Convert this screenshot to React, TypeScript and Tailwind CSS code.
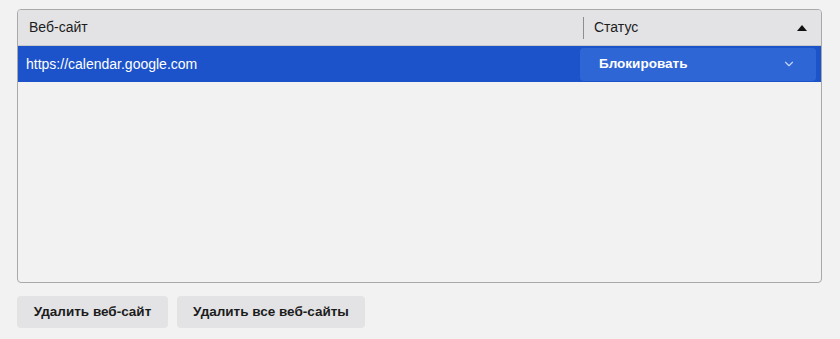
import { ChevronDown } from 'lucide-react';

const sites = [{ url: 'https://calendar.google.com', status: 'Блокировать' }];

export default function App() {
  return (
    <div
      className="h-[339px] w-[840px] bg-[#f2f2f2] pl-[17px] pr-[18px] pt-[9px]"
      style={{ fontFamily: '"Liberation Sans", Arial, sans-serif' }}
    >
      {/* Table */}
      <div className="h-[274px] overflow-hidden rounded-[4px] border border-[#a9a9a9] bg-[#f2f2f2]">
        {/* Header */}
        <div className="flex h-[36px] items-center border-b border-[#c9c9cc] bg-[#e3e3e6] text-[14px] text-[#1c1c1c]">
          <div className="flex-1 pl-[11px]">Веб-сайт</div>
          <div className="h-[22px] w-px bg-[#8e8e90]"></div>
          <div className="flex w-[237px] items-center justify-between pl-[10px] pr-[14px]">
            <span>Статус</span>
            <svg width="10" height="6" viewBox="0 0 10 6" className="mt-[1px]">
              <path d="M5 0 L10 6 L0 6 Z" fill="#111" />
            </svg>
          </div>
        </div>

        {/* Rows */}
        {sites.map((site) => (
          <div key={site.url} className="flex h-[36px] items-center bg-[#1c53cb] text-[14px] text-white">
            <div className="flex-1 pl-[8px] pt-[1px]">{site.url}</div>
            <div className="mr-[5px] flex h-[33px] w-[236px] items-center justify-between rounded-[4px] bg-[#2f66d6] pl-[19px] pr-[20px]">
              <span className="text-[13.5px] font-bold">{site.status}</span>
              <ChevronDown className="h-[14px] w-[14px] text-[#c3d4f6]" strokeWidth={2} />
            </div>
          </div>
        ))}
      </div>

      {/* Actions */}
      <div className="mt-[13px] flex gap-[9px]">
        <button className="h-[32px] w-[151px] rounded-[4px] bg-[#e3e3e5] text-center text-[13.5px] font-bold text-[#1c1c1c]">
          Удалить веб-сайт
        </button>
        <button className="h-[32px] w-[188px] rounded-[4px] bg-[#e3e3e5] text-center text-[13.5px] font-bold text-[#1c1c1c]">
          Удалить все веб-сайты
        </button>
      </div>
    </div>
  );
}
